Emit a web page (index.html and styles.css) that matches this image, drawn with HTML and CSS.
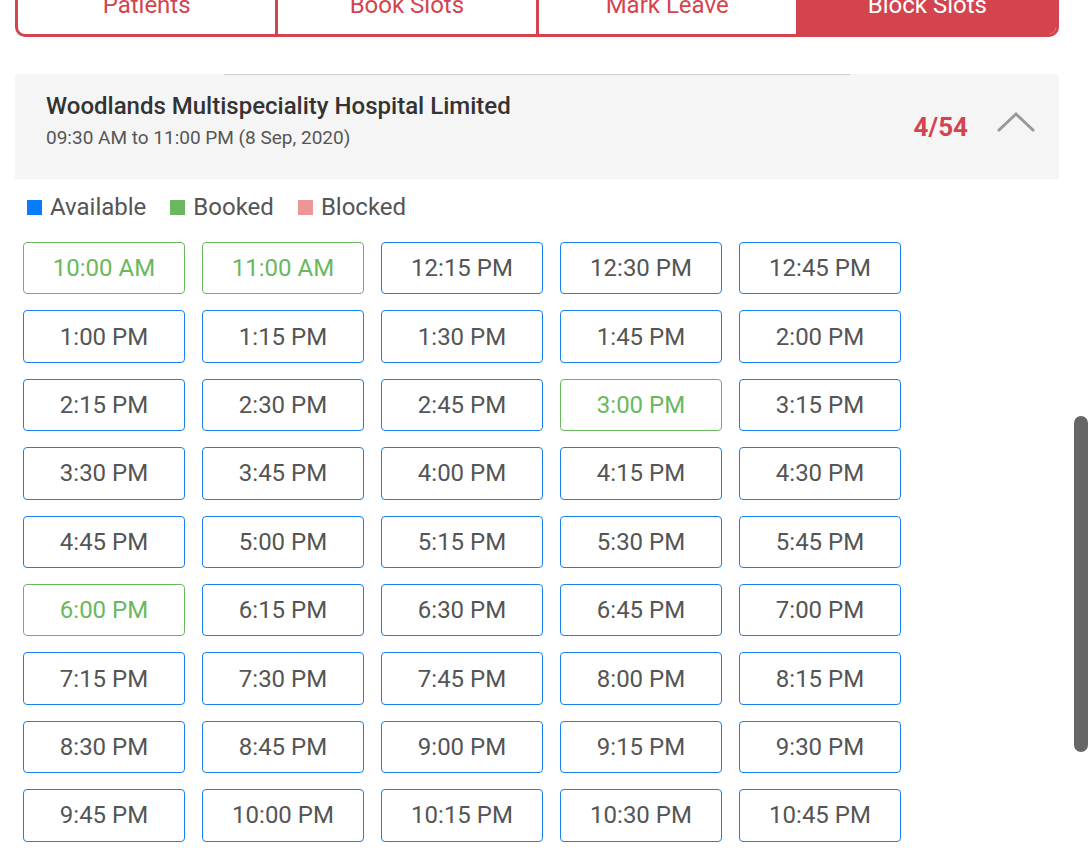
FILE: index.html
```html
<!DOCTYPE html>
<html>
<head>
<meta charset="utf-8">
<link rel="stylesheet" href="styles.css">
</head>
<body>
<div class="page">
  <nav class="tabs">
    <div class="tab">Patients</div>
    <div class="tab">Book Slots</div>
    <div class="tab">Mark Leave</div>
    <div class="tab active">Block Slots</div>
  </nav>

  <section class="panel">
    <div class="panel-line"></div>
    <div class="panel-head">
      <div class="info">
        <div class="title">Woodlands Multispeciality Hospital Limited</div>
        <div class="sub">09:30 AM to 11:00 PM (8 Sep, 2020)</div>
      </div>
      <div class="count">4/54</div>
      <svg class="chev" width="40" height="22" viewBox="0 0 40 22"><polyline points="2,20 20,3 38,20" fill="none" stroke="#999" stroke-width="3"/></svg>
    </div>
  </section>

  <div class="legend">
    <span class="key"><i class="sq blue"></i>Available</span>
    <span class="key"><i class="sq green"></i>Booked</span>
    <span class="key"><i class="sq pink"></i>Blocked</span>
  </div>

  <div class="slots">
    <div class="slot booked">10:00 AM</div>
    <div class="slot booked">11:00 AM</div>
    <div class="slot">12:15 PM</div>
    <div class="slot">12:30 PM</div>
    <div class="slot">12:45 PM</div>
    <div class="slot">1:00 PM</div>
    <div class="slot">1:15 PM</div>
    <div class="slot">1:30 PM</div>
    <div class="slot">1:45 PM</div>
    <div class="slot">2:00 PM</div>
    <div class="slot">2:15 PM</div>
    <div class="slot">2:30 PM</div>
    <div class="slot">2:45 PM</div>
    <div class="slot booked">3:00 PM</div>
    <div class="slot">3:15 PM</div>
    <div class="slot">3:30 PM</div>
    <div class="slot">3:45 PM</div>
    <div class="slot">4:00 PM</div>
    <div class="slot">4:15 PM</div>
    <div class="slot">4:30 PM</div>
    <div class="slot">4:45 PM</div>
    <div class="slot">5:00 PM</div>
    <div class="slot">5:15 PM</div>
    <div class="slot">5:30 PM</div>
    <div class="slot">5:45 PM</div>
    <div class="slot booked">6:00 PM</div>
    <div class="slot">6:15 PM</div>
    <div class="slot">6:30 PM</div>
    <div class="slot">6:45 PM</div>
    <div class="slot">7:00 PM</div>
    <div class="slot">7:15 PM</div>
    <div class="slot">7:30 PM</div>
    <div class="slot">7:45 PM</div>
    <div class="slot">8:00 PM</div>
    <div class="slot">8:15 PM</div>
    <div class="slot">8:30 PM</div>
    <div class="slot">8:45 PM</div>
    <div class="slot">9:00 PM</div>
    <div class="slot">9:15 PM</div>
    <div class="slot">9:30 PM</div>
    <div class="slot">9:45 PM</div>
    <div class="slot">10:00 PM</div>
    <div class="slot">10:15 PM</div>
    <div class="slot">10:30 PM</div>
    <div class="slot">10:45 PM</div>
  </div>
</div>
<div class="scrollbar"></div>
</body>
</html>
```
FILE: styles.css
```css
html, body {
  margin: 0;
  padding: 0;
  background: #fff;
  overflow: hidden;
  height: 849px;
}
body {
  font-family: Roboto, "Liberation Sans", Arial, sans-serif;
}
.page {
  padding: 0 29px 0 15px;
}
.tabs {
  display: flex;
  margin-top: -20px;
  height: 54px;
  border: 3px solid #d3444f;
  border-top: none;
  border-radius: 0 0 10px 10px;
  overflow: hidden;
}
.tab {
  flex: 1;
  box-sizing: border-box;
  height: 54px;
  padding-top: 13px;
  font-size: 24px;
  line-height: 24px;
  color: #d3444f;
  text-align: center;
  border-right: 3px solid #d3444f;
}
.tab.active {
  border-right: none;
  background: #d3444f;
  color: #fff;
}
.panel {
  margin-top: 37px;
  background: #f5f5f5;
  border-radius: 4px 4px 0 0;
  position: relative;
}
.panel-line {
  position: absolute;
  top: 0;
  left: 20%;
  width: 60%;
  height: 1px;
  background: #cccccc;
}
.panel-head {
  display: flex;
  align-items: center;
  height: 105px;
  padding: 0 23px 0 31px;
}
.info {
  flex: 1;
  margin-top: -12px;
}
.title {
  font-size: 24px;
  font-weight: 500;
  color: #333;
  line-height: 30px;
}
.sub {
  font-size: 19px;
  color: #555;
  line-height: 24px;
  margin-top: 5px;
}
.count {
  font-size: 26px;
  font-weight: 700;
  color: #d3444f;
  margin-right: 28px;
}
.chev {
  margin-top: -10px;
}
.legend {
  display: flex;
  align-items: center;
  padding: 15px 12px 0;
  height: 26px;
}
.key {
  display: flex;
  align-items: center;
  font-size: 24px;
  color: #555;
  margin-right: 24px;
}
.sq {
  display: inline-block;
  width: 15px;
  height: 15px;
  margin-right: 8px;
}
.sq.blue { background: #087cff; }
.sq.green { background: #6ab85d; }
.sq.pink { background: #ee9697; }
.slots {
  display: grid;
  grid-template-columns: repeat(5, 162px);
  column-gap: 17px;
  row-gap: 16px;
  padding: 22px 8px 0;
}
.slot {
  box-sizing: border-box;
  height: 52.4px;
  border: 1px solid #1a7fef;
  border-radius: 4px;
  display: flex;
  align-items: center;
  justify-content: center;
  font-size: 24px;
  color: #555;
}
.slot.booked {
  border-color: #6ab85d;
  color: #6ab85d;
}
.scrollbar {
  position: fixed;
  left: 1074px;
  top: 416px;
  width: 14px;
  height: 336px;
  border-radius: 7px;
  background: #666;
}
```
